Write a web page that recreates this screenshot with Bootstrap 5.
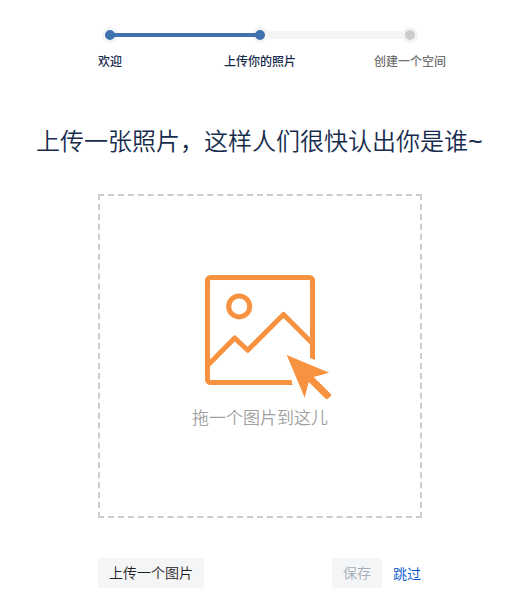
<!DOCTYPE html>
<html lang="zh-CN">
<head>
<meta charset="utf-8">
<meta name="viewport" content="width=device-width, initial-scale=1">
<title>上传你的照片</title>
<link href="https://cdn.jsdelivr.net/npm/bootstrap@5.3.0/dist/css/bootstrap.min.css" rel="stylesheet">
<style>
  body { font-family: "Noto Sans CJK SC", sans-serif; color: #172b4d; background: #fff; overflow: hidden; }
  .setup { width: 520px; padding-top: 27px; }
  .panel-col { width: 324px; }
  .tracker { width: 316px; height: 16px; }
  .dot { width: 16px; height: 16px; border: 3px solid #f4f4f4; background: #3e73b0; flex: none; }
  .dot.pending { background: #ccc; }
  .rail { height: 8px; background: #f4f4f4; flex: 0 0 134px; }
  .rail.complete { position: relative; z-index: 1; height: 4px; background: #3e73b0; box-shadow: -4px 0 #3e73b0, 4px 0 #3e73b0; }
  .step-names { width: 450px; font-size: 12px; line-height: 18px; font-weight: 500; margin-top: 9px; }
  .step-names .later { color: #707070; }
  .headline { font-size: 24px; line-height: 32px; font-weight: 350; margin: 54px 0 38px; white-space: nowrap; }
  .tilde { display: inline-block; width: 16px; font-family: "Noto Sans", sans-serif; font-size: 26px; line-height: 1; font-weight: 400; }
  .dropzone { height: 324px; border: 2px dashed #ccc; padding-top: 79px; }
  .dropzone svg { margin-left: 105px; }
  .hint { font-size: 17px; line-height: 24px; font-weight: 350; color: #a0a0a0; margin-top: 5px; }
  .actions { margin-top: 40px; }
  .actions .btn { height: 30px; font-size: 14px; line-height: 20px; border: 0; border-radius: 3px; padding: 4px 11px 6px; font-weight: 350; white-space: nowrap; }
  .actions .btn-upload { color: #222; background: #f4f5f7; border-radius: 0 3px 3px 0; }
  .actions .btn-save:disabled { color: #a5adba; background: #f4f5f7; opacity: 1; }
  .skip { font-size: 14px; line-height: 20px; font-weight: 350; margin: 0 1px 0 11px; color: #0052cc; }
</style>
<script src="https://cdn.jsdelivr.net/npm/bootstrap@5.3.0/dist/js/bootstrap.bundle.min.js"></script>
</head>
<body>
<main class="setup d-flex flex-column align-items-center">
  <div class="tracker d-flex align-items-center">
    <span class="dot rounded-circle"></span>
    <span class="rail complete"></span>
    <span class="dot rounded-circle"></span>
    <span class="rail"></span>
    <span class="dot pending rounded-circle"></span>
  </div>
  <div class="step-names row g-0 text-center">
    <span class="col-4">欢迎</span>
    <span class="col-4">上传你的照片</span>
    <span class="col-4 later">创建一个空间</span>
  </div>
  <h1 class="headline">上传一张照片，这样人们很快认出你是谁<span class="tilde">~</span></h1>
  <div class="panel-col">
    <div class="dropzone">
      <svg class="d-block" width="127" height="125" viewBox="205 275 127 125" fill="none" stroke="#f79240" stroke-width="5">
        <path d="M291.7 382.5H211Q207.5 382.5 207.5 379V281Q207.5 277.5 211 277.5H309Q312.5 277.5 312.5 281V358"/>
        <path d="M315 360l-5-2v-4h5zM290.5 380h-3v5h5.2z" fill="#f79240" stroke="none"/>
        <circle cx="239.2" cy="306.4" r="10.5"/>
        <path d="M207.5 365.5L234.7 338L247.7 350.3L283.5 314.5L312.5 343.5" stroke-linejoin="round"/>
        <path d="M286.7 355L329.3 372.7L313.7 377L330.6 393.7Q332 395 330.6 396.3L328 398.6Q326.7 399.8 325.4 398.6L308.7 382L304.7 397.7Z" fill="#f79240" stroke="none"/>
      </svg>
      <p class="hint text-center mb-0">拖一个图片到这儿</p>
    </div>
    <div class="actions d-flex align-items-center">
      <button type="button" class="btn btn-upload">上传一个图片</button>
      <button type="button" class="btn btn-save ms-auto" disabled>保存</button>
      <a href="#" class="skip text-decoration-none">跳过</a>
    </div>
  </div>
</main>
</body>
</html>
